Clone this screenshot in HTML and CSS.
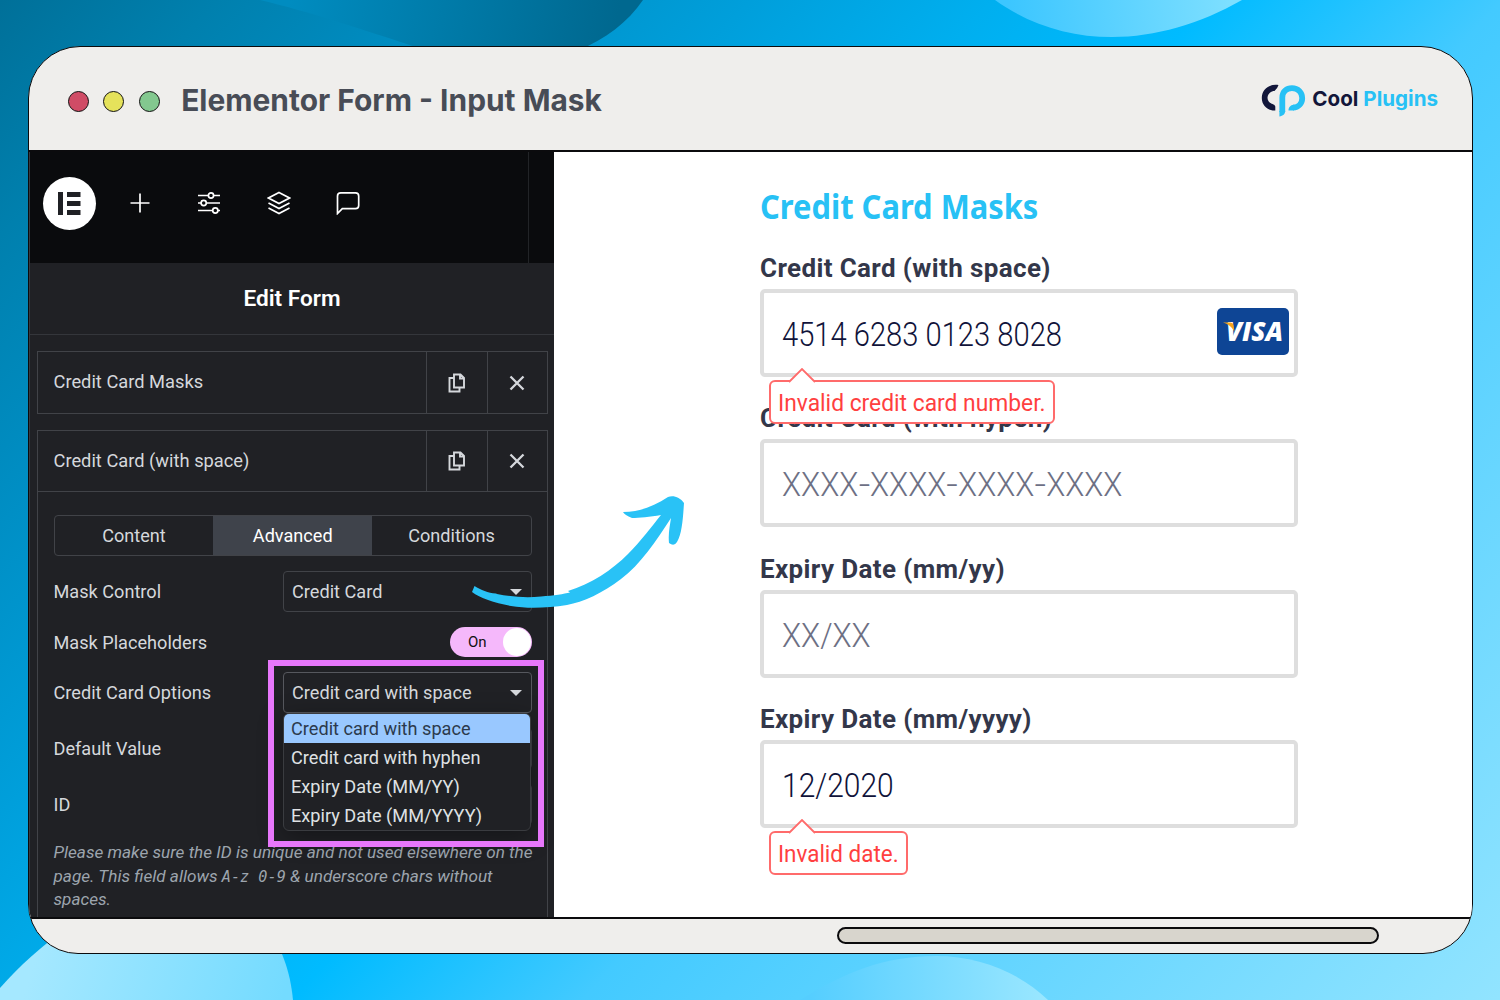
FILE: index.html
```
<!DOCTYPE html>
<html lang="en">
<head>
<meta charset="utf-8">
<title>Elementor Form - Input Mask</title>
<link rel="stylesheet" href="styles.css">
</head>
<body>
<svg class="backdrop" viewBox="0 0 1500 1000" aria-hidden="true">
  <defs>
    <linearGradient id="sky" gradientUnits="userSpaceOnUse" x1="0" y1="0" x2="1312" y2="1208">
      <stop offset="0" stop-color="#007099"/><stop offset=".09" stop-color="#0080ae"/><stop offset=".2" stop-color="#008fc5"/><stop offset=".31" stop-color="#009fdb"/><stop offset=".41" stop-color="#00afef"/><stop offset=".5" stop-color="#00bbff"/><stop offset=".62" stop-color="#43caff"/><stop offset="1" stop-color="#92e4ff"/>
    </linearGradient>
    <linearGradient id="wave" gradientUnits="userSpaceOnUse" x1="290" y1="0" x2="610" y2="60"><stop offset="0" stop-color="#008cc0"/><stop offset="1" stop-color="#00688f"/></linearGradient>
    <linearGradient id="bowl" gradientUnits="userSpaceOnUse" x1="1010" y1="20" x2="1230" y2="0"><stop offset="0" stop-color="#3cc6ff"/><stop offset="1" stop-color="#7ddfff"/></linearGradient>
    <linearGradient id="dune" gradientUnits="userSpaceOnUse" x1="40" y1="940" x2="280" y2="1010"><stop offset="0" stop-color="#a5e8ff"/><stop offset="1" stop-color="#74dbff"/></linearGradient>
    <linearGradient id="hill" gradientUnits="userSpaceOnUse" x1="810" y1="0" x2="1050" y2="0"><stop offset="0" stop-color="#55ceff"/><stop offset="1" stop-color="#9be7ff"/></linearGradient>
  </defs>
  <rect width="1500" height="1000" fill="url(#sky)"/>
  <path d="M260 0C310 12 355 27 425 50H578C605 40 628 22 643 0Z" fill="url(#wave)"/>
  <path d="M995 0C1030 25 1070 37 1112 37C1155 37 1200 24 1242 0Z" fill="url(#bowl)"/>
  <path d="M0 988C20 965 40 948 70 925H265C282 948 290 970 293 1000H0Z" fill="url(#dune)"/>
  <path d="M800 1000C845 972 885 956 936 956C980 956 1020 973 1048 1000Z" fill="url(#hill)"/>
</svg>

<main class="window">
  <header class="titlebar">
    <span class="dot dot-red"></span><span class="dot dot-yellow"></span><span class="dot dot-green"></span>
    <h1 class="window-title">Elementor Form - Input Mask</h1>
    <div class="brand">
      <svg width="45" height="34" viewBox="0 0 45 34" fill="none">
        <path d="M17.500 1C8 -.5 .8 5.500 .8 14C.8 21.500 6.500 26.600 14.300 26.600V22.500Q14 20.800 11.500 20C8 18.800 6.500 16.500 6.500 13.800C6.500 10 9.500 7 13.500 7Q16.500 4.500 17.500 1Z" fill="#12163a"/>
        <path d="M21.300 28V13.500C21.300 7.500 25.500 4.100 31 4.100C37 4.100 41.200 8.500 41.200 14C41.200 19.500 37.500 23.300 32 23.600" stroke="#27c1f5" stroke-width="5.800"/>
        <path d="M18.400 27H24.200C24.200 30 22 32 18.400 32.500ZM33 20.700V26.500H27.500C27.500 23.500 29 21 33 20.700Z" fill="#27c1f5"/>
      </svg>
      <span class="brand-name">Cool <em>Plugins</em></span>
    </div>
  </header>

  <div class="content">
    <aside class="panel">
      <nav class="toolbar">
        <span class="logo"><svg width="23" height="23" viewBox="0 0 23 23" fill="#202125"><path d="M0 0H5V23H0ZM9 0H22.500V5H9ZM9 9H22.500V14H9ZM9 18H22.500V23H9Z"/></svg></span>
        <svg class="tool" viewBox="0 0 24 24"><path d="M12 2.500V21.500M2.500 12H21.500"/></svg>
        <svg class="tool" viewBox="0 0 24 24"><path d="M1 4.500H11.500M16.500 4.500H23M1 12H4M9.500 12H23M1 19.500H15.500M21 19.500H23"/><circle cx="14" cy="4.500" r="2.600"/><circle cx="6.700" cy="12" r="2.600"/><circle cx="18.300" cy="19.500" r="2.600"/></svg>
        <svg class="tool" viewBox="0 0 24 24"><path d="M12 1.500L22.500 7L12 12.500L1.500 7ZM1.500 12L12 17.500L22.500 12M1.500 17L12 22.500L22.500 17"/></svg>
        <svg class="tool" viewBox="0 0 24 24"><path d="M1.500 22.500V5Q1.500 1.800 4.700 1.800H19.500Q22.700 1.800 22.700 5V14.500Q22.700 17.700 19.500 17.700H6.300Z"/></svg>
      </nav>
      <h2 class="panel-title">Edit Form</h2>
      <div class="items">
        <section class="item">
          <div class="item-head">
            <span class="item-name">Credit Card Masks</span>
            <span class="item-btn"><svg width="18" height="20" viewBox="0 0 18 20"><path d="M6 1.500H12.500L16 5V14.500H6ZM12 1.500V5.500H16M6 5H1.500V18.500H11.500V14.500"/></svg></span>
            <span class="item-btn"><svg class="cross" width="16" height="16" viewBox="0 0 16 16"><path d="M1.500 1.500L14.500 14.500M14.500 1.500L1.500 14.500"/></svg></span>
          </div>
        </section>
        <section class="item item-open">
          <div class="item-head">
            <span class="item-name">Credit Card (with space)</span>
            <span class="item-btn"><svg width="18" height="20" viewBox="0 0 18 20"><path d="M6 1.500H12.500L16 5V14.500H6ZM12 1.500V5.500H16M6 5H1.500V18.500H11.500V14.500"/></svg></span>
            <span class="item-btn"><svg class="cross" width="16" height="16" viewBox="0 0 16 16"><path d="M1.500 1.500L14.500 14.500M14.500 1.500L1.500 14.500"/></svg></span>
          </div>
          <div class="item-body">
            <div class="tabs"><span class="tab">Content</span><span class="tab tab-active">Advanced</span><span class="tab">Conditions</span></div>
            <div class="row"><span>Mask Control</span><span class="select">Credit Card<i class="caret"></i></span></div>
            <div class="row row-toggle"><span>Mask Placeholders</span><span class="toggle">On<i class="knob"></i></span></div>
            <div class="row row-options"><span>Credit Card Options</span>
              <span class="select select-focus">Credit card with space<i class="caret"></i>
                <span class="dropdown">
                  <span class="option option-active">Credit card with space</span>
                  <span class="option">Credit card with hyphen</span>
                  <span class="option">Expiry Date (MM/YY)</span>
                  <span class="option">Expiry Date (MM/YYYY)</span>
                </span>
              </span>
            </div>
            <div class="row row-text"><span>Default Value</span><span class="select"></span></div>
            <div class="row row-text"><span>ID</span><span class="select"></span></div>
            <p class="hint">Please make sure the ID is unique and not used elsewhere on the page. This field allows <code>A-z 0-9</code> &amp; underscore chars without spaces.</p>
          </div>
        </section>
      </div>
      <div class="highlight"></div>
    </aside>

    <form class="preview">
      <h2 class="form-title"><span>Credit Card Masks</span></h2>
      <div class="field">
        <label>Credit Card (with space)</label>
        <div class="input"><span class="value">4514 6283 0123 8028</span>
          <span class="visa">VISA<svg class="visa-wing" width="12" height="12" viewBox="0 0 12 12"><path d="M0 .5H7.500Q10 .5 10.500 3L11.500 9.500Q7.500 2.500 0 .5Z" fill="#f6a51b"/></svg></span>
        </div>
        <div class="error"><svg class="tip" width="28" height="15" viewBox="0 0 28 15"><path d="M1 14L14 1L27 14V15H1Z" fill="#fff"/><path d="M1 14L14 1L27 14" fill="none" stroke="#ff6b6b" stroke-width="1.800"/></svg><span>Invalid credit card number.</span></div>
      </div>
      <div class="field">
        <label>Credit Card (with hypen)</label>
        <div class="input"><span class="value placeholder">XXXX<b>-</b>XXXX<b>-</b>XXXX<b>-</b>XXXX</span></div>
      </div>
      <div class="field">
        <label>Expiry Date (mm/yy)</label>
        <div class="input"><span class="value placeholder">XX/XX</span></div>
      </div>
      <div class="field">
        <label>Expiry Date (mm/yyyy)</label>
        <div class="input"><span class="value value-date">12/2020</span></div>
        <div class="error error-short"><svg class="tip" width="28" height="15" viewBox="0 0 28 15"><path d="M1 14L14 1L27 14V15H1Z" fill="#fff"/><path d="M1 14L14 1L27 14" fill="none" stroke="#ff6b6b" stroke-width="1.800"/></svg><span>Invalid date.</span></div>
      </div>
    </form>
  </div>

  <footer class="footer"><div class="scrollbar"></div></footer>
</main>

<svg class="arrow" width="216" height="116" viewBox="0 0 216 116" aria-hidden="true">
  <path d="M4.500 90C11 94 18 97 26 97.500L27 98C42 101 57 102 71 100.500C84 99.500 94 98 100 96.500L98 95C121 88 142 74 158 58C171 45 182 30 191 19C180 21 169 22 162 22C157 20 154 18 153 16C170 16 184 10 198 1C203-1 210 1 214 7C213 22 212 38 207 46Q204 51 199 47C198 38 200 29 201 22C187 44 170 69 151 83C133 97 113 106 97 109C78 112 58 113 41 110C25 107 10 102 2 96Z" fill="#29c2f6"/>
</svg>
</body>
</html>
```
FILE: styles.css
```
* { box-sizing: border-box; }
body {
  margin: 0;
  width: 1500px;
  height: 1000px;
  overflow: hidden;
  background: #00bbff;
  font-family: Roboto, "Liberation Sans", sans-serif;
}
h1, h2, p { margin: 0; }
.backdrop { position: absolute; inset: 0; width: 1500px; height: 1000px; z-index: -1; }

.window {
  display: flex;
  flex-direction: column;
  width: 1445px;
  height: 908px;
  margin: 46px 0 0 28px;
  border: 1.5px solid #0b0b0d;
  border-radius: 52px 52px 50px 50px;
  background: #efeeec;
  overflow: hidden;
}
.titlebar {
  flex: none;
  display: flex;
  align-items: center;
  height: 105px;
  padding: 4px 34px 0 39px;
  border-bottom: 2px solid #0b0b0d;
}
.dot { width: 21px; height: 21px; margin-right: 14.400px; border: 1.500px solid #111; border-radius: 50%; position: relative; top: 1px; }
.dot-red { background: #d04c66; }
.dot-yellow { background: #e5e25b; }
.dot-green { background: #83c88f; }
.window-title { margin-left: 7px; font: 700 29.920px/40px Inter, sans-serif; color: #484c56; position: relative; top: -1px; white-space: nowrap; }
.brand { display: flex; gap: 6px; margin-left: auto; }
.brand-name { font: 700 20.600px/30px Inter, sans-serif; color: #12163a; white-space: nowrap; }
.brand-name em { font-style: normal; color: #27c1f5; }

.content { flex: none; display: flex; height: 765px; background: #fff; }
.panel { position: relative; flex: none; width: 525px; height: 765px; overflow: hidden; background: #202125; color: #d5d8dc; font-size: 18.300px; border-left: 1px solid #393b40; }
.toolbar { display: flex; align-items: center; height: 111px; width: 525px; padding: 0 0 9px 13px; background: linear-gradient(90deg, transparent 498px, #222427 498px, #222427 499px, transparent 499px), #0a0b0d; }
.logo { display: flex; align-items: center; justify-content: center; width: 53px; height: 53px; border-radius: 50%; background: #fff; margin-right: -14px; }
.tool { width: 24px; height: 24px; margin-left: 45.600px; fill: none; stroke: #fff; stroke-width: 1.700; }
.panel-title { height: 72px; border-bottom: 1px solid #34363b; font: 600 22.600px/71px Roboto, sans-serif; color: #fff; text-align: center; }
.items { display: flex; flex-direction: column; gap: 16px; padding: 16px 6px 0 7px; }
.item { border: 1px solid #414348; }
.item-open { height: 500px; }
.item-head { display: flex; height: 61px; }
.item-open .item-head { border-bottom: 1px solid #414348; }
.item-name { flex: 1; padding-left: 15.500px; line-height: 60px; }
.item-btn { display: flex; align-items: center; justify-content: center; width: 60.500px; border-left: 1px solid #414348; }
.item-btn svg { fill: none; stroke: #d5d8dc; stroke-width: 1.900; }
.item-btn .cross { stroke-width: 2.300; }
.item-body { padding: 23px 15px 0 15.500px; }
.tabs { display: flex; height: 41px; border: 1px solid #414348; border-radius: 4px; }
.tab { flex: 1; text-align: center; line-height: 39px; font-size: 18.100px; }
.tab-active { background: #3f434b; color: #fff; }
.row { display: flex; justify-content: space-between; align-items: center; height: 41px; margin-top: 15px; font-size: 18.150px; }
.select { position: relative; width: 249px; height: 41px; padding-left: 8px; line-height: 39px; border: 1px solid #414348; border-radius: 4px; }
.select-focus { border-color: #56585e; }
.caret { position: absolute; right: 9px; top: 17px; border: 6.500px solid transparent; border-top: 6.500px solid #d5d8dc; border-bottom: 0; }
.row-toggle { height: 30px; }
.toggle { position: relative; width: 82px; height: 30px; padding-left: 18px; border-radius: 15px; background: #f5b8fb; color: #111; font-size: 15px; line-height: 30px; }
.knob { position: absolute; right: 1px; top: 1px; width: 28px; height: 28px; border-radius: 50%; background: #fff; }
.dropdown { position: absolute; z-index: 2; left: -1px; top: 40px; width: 248px; height: 118px; border: 1px solid #3a3c40; border-radius: 6px; background: #202125; overflow: hidden; box-shadow: 0 6px 24px rgba(0,0,0,.35); }
.option { display: block; height: 29px; padding-left: 7px; line-height: 29px; color: #dfe1e4; }
.option-active { background: #99c8ff; color: #2c3a4c; }
.hint { margin-top: 16px; width: 490px; font-style: italic; font-size: 17.150px; line-height: 23.700px; color: #9da5ae; }
.hint code { font: italic 15.200px "DejaVu Sans Mono", monospace; line-height: 1; }
.highlight { position: absolute; z-index: 3; left: 238px; top: 508px; width: 276px; height: 187px; border: 6px solid #e777fb; }

.preview { width: 538px; margin-left: 206px; padding-top: 31px; }
.form-title { height: 47px; font: 700 34px/46px "Noto Sans", sans-serif; color: #27c1f5; white-space: nowrap; }
.form-title span { display: inline-block; transform: scaleX(.908); transform-origin: left; }
.field { position: relative; height: 150.400px; padding-top: 23px; }
.field label { display: block; height: 36px; font: 700 26px/31px Roboto, sans-serif; letter-spacing: .370px; color: #33374a; white-space: nowrap; }
.input { position: relative; height: 88px; border: 4px solid #dedede; border-radius: 5px; background: #fff; }
.value { display: inline-block; margin-left: 18px; font: 300 33.500px/84px Roboto, sans-serif; color: #10133a; white-space: nowrap; transform: scaleX(.87); transform-origin: left; }
.value-date { transform: scaleX(.895); }
.placeholder { color: #6d7084; transform: scaleX(.93); }
.placeholder b { display: inline-block; margin: 0 1.500px; font-weight: 300; transform: scaleX(1.300); }
.visa { position: absolute; right: 5px; top: 15px; width: 72px; height: 47px; padding-left: 9px; border-radius: 5px; background: #0e4595; color: #fff; font: italic 800 26px/47px "Open Sans", sans-serif; }
.visa-wing { position: absolute; left: 6px; top: 14px; }
.error { position: absolute; z-index: 1; left: 9px; top: 150px; width: 286px; height: 44px; padding-left: 7px; border: 2px solid #ff6b6b; border-radius: 6px; background: #fff; color: #ff3f3f; font: 400 24px/43px Roboto, sans-serif; white-space: nowrap; }
.error > span { display: inline-block; transform: scaleX(.95); transform-origin: left; }
.error-short { width: 139px; }
.error-short > span { transform: scaleX(.935); }
.tip { position: absolute; left: 17px; top: -14px; }

.footer { flex: 1; border-top: 2px solid #0b0b0d; padding: 8px 0 0 807.500px; }
.scrollbar { width: 542px; height: 17px; border: 2px solid #0b0b0d; border-radius: 9px; background: #d8d5cd; }
.arrow { position: absolute; left: 470px; top: 496px; }
```
